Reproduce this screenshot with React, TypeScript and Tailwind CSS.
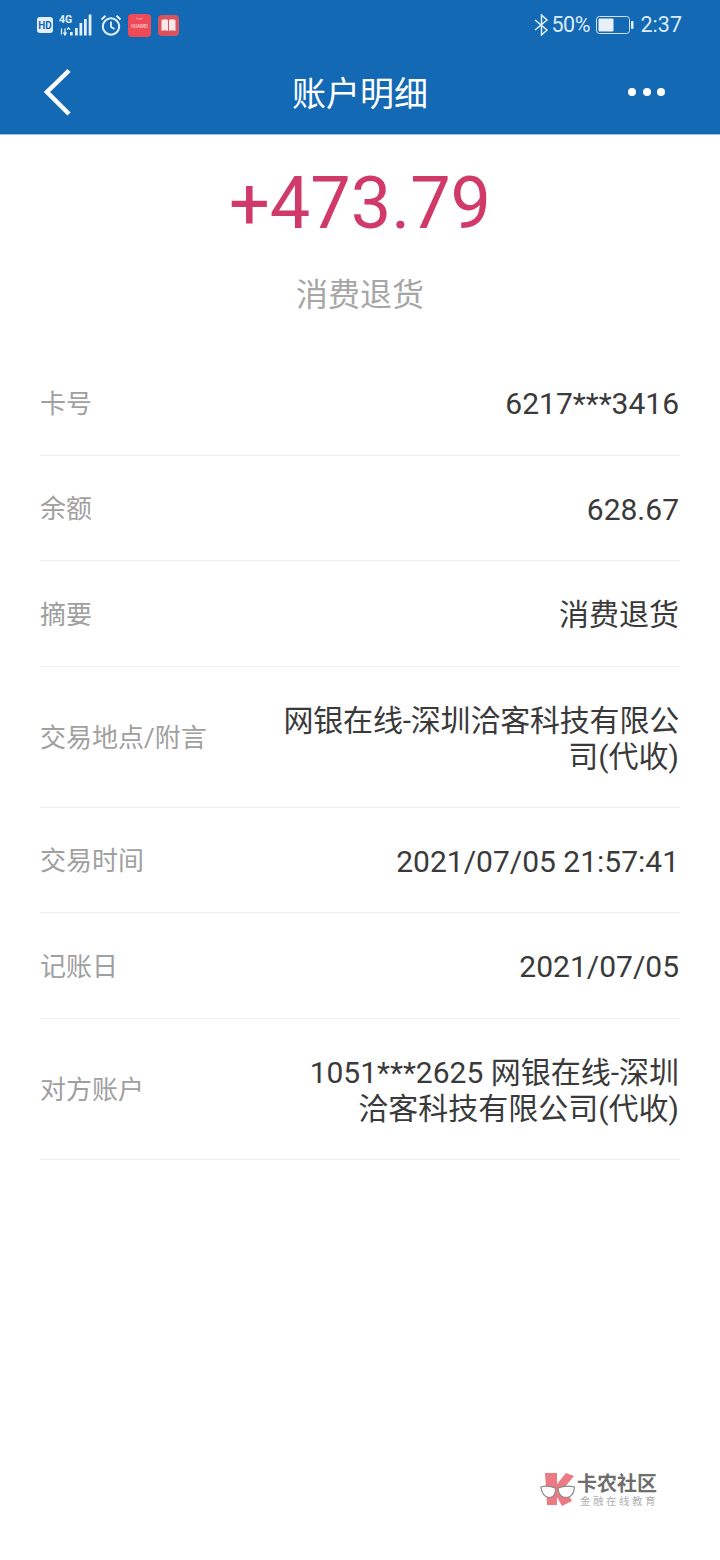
const font = { fontFamily: 'Roboto, "Noto Sans CJK SC", sans-serif' };

function StatusLeft() {
  return (
    <div className="flex items-center">
      <svg width="16" height="16" viewBox="0 0 16 16" className="ml-[37px]">
        <rect x="0" y="0" width="16" height="16" rx="3" fill="#e3f0fb" />
        <text x="8" y="12" textAnchor="middle" fontSize="10" fontWeight="700" fill="#1469b5" fontFamily="Roboto">HD</text>
      </svg>
      <svg width="34" height="22" viewBox="0 0 34 22" className="ml-[6px]">
        <text x="0" y="9" fontSize="10.500" fontWeight="700" fill="#e3f0fb" fontFamily="Roboto">4G</text>
        <path d="M2.500 14.500v6M6 14.500v6.500M4.500 18.500L6 21l1.500-2.500M8 15.500l1.500-1.500 1.500 1.500" stroke="#e3f0fb" strokeWidth="1.300" fill="none" />
        <rect x="11" y="18" width="2.700" height="3.500" fill="#e3f0fb" />
        <rect x="16" y="14" width="2.700" height="7.500" fill="#e3f0fb" />
        <rect x="20.500" y="9" width="2.700" height="12.500" fill="#e3f0fb" />
        <rect x="25" y="5" width="2.700" height="16.500" fill="#e3f0fb" />
        <rect x="29.700" y="0.500" width="2.700" height="21" fill="#e3f0fb" />
      </svg>
      <svg width="22" height="22" viewBox="0 0 22 22" className="ml-[7px]" fill="none" stroke="#e3f0fb">
        <circle cx="11" cy="12.500" r="8.200" strokeWidth="2" />
        <path d="M11 7.500v5.500l3.500 2" strokeWidth="1.800" />
        <path d="M1.500 5.500L5.500 1.800M20.500 5.500L16.500 1.800" strokeWidth="2" />
      </svg>
      <svg width="23" height="23" viewBox="0 0 23 23" className="ml-[6px]">
        <rect width="23" height="23" rx="4" fill="#ee4a57" />
        <path d="M8.500 4q3 3 6 0" stroke="#fbdde0" fill="none" strokeWidth="0.800" />
        <text x="11.500" y="14" textAnchor="middle" fontSize="4.500" fill="#fde8ea" fontFamily="Roboto">HUAWEI</text>
      </svg>
      <svg width="21" height="21" viewBox="0 0 21 21" className="ml-[7px]">
        <rect width="21" height="21" rx="4" fill="#d9535f" />
        <path d="M3.500 5q4-1.500 6.500 0v11q-3-1.500-6.500 0zM11 5q3-1.500 6.500 0v11q-3.500-1.500-6.500 0z" fill="#fbe6e8" />
      </svg>
    </div>
  );
}

function StatusRight() {
  return (
    <div className="flex items-center text-[#dcebf8] text-[21.500px] mr-[38px]">
      <svg width="15" height="22" viewBox="0 0 15 22" fill="none" stroke="#e3f0fb" strokeWidth="1.500">
        <path d="M1 6l12 10-5.500 5V1L13 6 1 16" />
      </svg>
      <span className="ml-[3px] w-[37px] tracking-[-0.5px]">50%</span>
      <svg width="38" height="20" viewBox="0 0 38 20" className="ml-[7px]">
        <rect x="0.500" y="1.500" width="33" height="17" rx="3" fill="none" stroke="#cfe2f3" strokeWidth="1" />
        <rect x="2.500" y="3.500" width="15" height="13" rx="1" fill="#e8f0fa" />
        <rect x="35" y="6" width="2.500" height="8" rx="1" fill="#e3f0fb" />
      </svg>
      <span className="ml-[7px]">2:37</span>
    </div>
  );
}

function Row({ label, children, tall }: { label: string; children: React.ReactNode; tall?: boolean }) {
  return (
    <div className={`flex items-center justify-between border-b border-[#eeeeee] pt-[4px] ${tall ? 'h-[141px]' : 'h-[105.5px]'}`}>
      <span className="text-[26px] text-[#a0a0a0] whitespace-nowrap">{label}</span>
      <div className="w-[420px] pr-[1px] text-right text-[30px] leading-[36px] text-[#3a3a3a]">{children}</div>
    </div>
  );
}

function Watermark() {
  return (
    <div className="absolute left-[540px] top-[1471px] flex items-start">
      <svg width="36" height="38" viewBox="0 0 36 38">
        <path d="M5 2h12v11L26 2l8 3-10 12 8 13-10 5-5-9v8H7z" fill="#ec7a84" />
        <path d="M0.800 16q7-2 14.500 1q1 9-6 9.500Q2.500 26.500 0.800 16zM18 17q8-3 16.500-1q-1 10.500-8 10.500q-8 0-8.500-9.500z" fill="#fff" stroke="#8a8a8a" strokeWidth="1.200" />
      </svg>
      <div className="ml-[1px] flex flex-col">
        <span className="text-[20px] leading-[22px] mt-[2px] font-bold text-[#6e6e6e] whitespace-nowrap">卡农社区</span>
        <span className="text-[10.500px] leading-[14px] ml-[3px] tracking-[2.500px] text-[#b0b0b0] whitespace-nowrap">金融在线教育</span>
      </div>
    </div>
  );
}

export default function App() {
  return (
    <div className="relative w-[720px] h-[1560px] bg-white overflow-hidden" style={font}>
      <header className="h-[135px] bg-[#1469b5] flex flex-col border-b border-[#9cc3e3]">
        <div className="h-[50px] flex items-center justify-between">
          <StatusLeft />
          <StatusRight />
        </div>
        <div className="relative flex-1 flex items-center justify-center text-white">
          <svg width="30" height="50" viewBox="0 0 30 50" className="absolute left-[42px] top-[17px]" fill="none" stroke="#fff" strokeWidth="4.500">
            <path d="M27 3.500L5 25 27 47" />
          </svg>
          <span className="text-[34px] leading-[40px] mt-[4px]">账户明细</span>
          <div className="absolute left-[628px] top-[38px] flex gap-[6.500px]">
            <span className="w-[8px] h-[8px] rounded-full bg-white" />
            <span className="w-[8px] h-[8px] rounded-full bg-white" />
            <span className="w-[8px] h-[8px] rounded-full bg-white" />
          </div>
        </div>
      </header>

      <div className="flex flex-col items-center">
        <div className="text-[72px] leading-[86px] mt-[26px] text-[#d03a68]">+473.79</div>
        <div className="text-[32px] leading-[40px] mt-[28px] text-[#a6a6a6]">消费退货</div>
      </div>

      <div className="mx-[40px] mt-[35px]">
        <Row label="卡号">6217***3416</Row>
        <Row label="余额">628.67</Row>
        <Row label="摘要">消费退货</Row>
        <Row label="交易地点/附言" tall>
          <span className="tracking-[-0.2px]">网银在线-深圳洽客科技有限公</span>
          <br />
          司(代收)
        </Row>
        <Row label="交易时间">2021/07/05 21:57:41</Row>
        <Row label="记账日">2021/07/05</Row>
        <Row label="对方账户" tall>
          1051***2625 网银在线-深圳
          <br />
          洽客科技有限公司(代收)
        </Row>
      </div>

      <Watermark />
    </div>
  );
}
